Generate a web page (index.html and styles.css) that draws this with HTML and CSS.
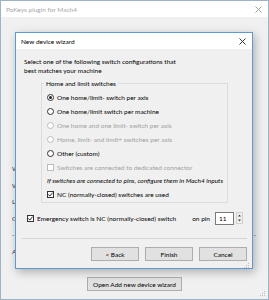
FILE: index.html
```html
<!doctype html>
<html>
  <head>
    <meta charset="utf-8">
    <title>PoKeys plugin for Mach4</title>
    <link rel="stylesheet" href="styles.css">
  </head>
  <body>
    <div class="window">
      <div class="titlebar">
        <span>PoKeys plugin for Mach4</span>
        <svg class="x" width="7" height="7"><path d="M0.5 0.5l6 6M6.5 0.5l-6 6" stroke="#a0a0a0" stroke-width="1"/></svg>
      </div>

      <div class="winbody">
        <div class="row"><span>W</span></div>
        <div class="row"><span>W</span></div>
        <div class="row"><span>L</span></div>
        <div class="row"><span>C</span></div>
        <div class="row"><span>-</span><span>-</span></div>
        <div class="row"><span>A</span></div>
        <div class="bottom">
          <button class="btn openbtn">Open Add new device wizard</button>
        </div>
        <div class="gripbox">
          <svg width="8" height="8"><g fill="#bdbdbd"><rect x="6" y="0" width="1" height="1"/><rect x="4" y="2" width="1" height="1"/><rect x="6" y="2" width="1" height="1"/><rect x="2" y="4" width="1" height="1"/><rect x="4" y="4" width="1" height="1"/><rect x="6" y="4" width="1" height="1"/></g></svg>
        </div>
      </div>

      <!-- the wizard dialog sits over the main window -->
      <div class="dialog">
        <div class="dlgtitle">
          <span>New device wizard</span>
          <svg class="x" width="7" height="7"><path d="M0.5 0.5l6 6M6.5 0.5l-6 6" stroke="#333" stroke-width="1"/></svg>
        </div>
        <div class="dlgbody">
          <p class="intro">Select one of the following switch configurations that<br>best matches your machine</p>

          <fieldset class="group">
            <legend>Home and limit switches</legend>
            <div class="opt"><span class="radio on"></span>One home/limit- switch per axis</div>
            <div class="opt"><span class="radio"></span>One home/limit switch per machine</div>
            <div class="opt off"><span class="radio"></span>One home and one limit- switch per axis</div>
            <div class="opt off"><span class="radio"></span>Home, limit- and limit+ switches per axis</div>
            <div class="opt"><span class="radio"></span>Other (custom)</div>
            <div class="opt off"><span class="check"></span>Switches are connected to dedicated connector</div>
            <div class="note">If switches are connected to pins, configure them in Mach4 inputs</div>
            <div class="opt"><span class="check"><svg width="5" height="5"><path d="M0.3 2.4l1.5 1.7L4.7 0.6" fill="none" stroke="#222" stroke-width="1"/></svg></span>NC (normally-closed) switches are used</div>
          </fieldset>

          <div class="estop">
            <span class="check"><svg width="5" height="5"><path d="M0.3 2.4l1.5 1.7L4.7 0.6" fill="none" stroke="#222" stroke-width="1"/></svg></span>
            <span>Emergency switch is NC (normally-closed) switch</span>
            <span class="pinlabel">on pin</span>
            <span class="spin">11</span>
            <span class="arrows">
              <svg width="7" height="12"><rect x="0.5" y="0.5" width="6" height="11" fill="#f0f0f0" stroke="#d0d0d0"/><path d="M2 4.5h3L3.5 2.5z" fill="#444"/><path d="M2 7.5h3L3.5 9.5z" fill="#444"/></svg>
            </span>
          </div>

          <div class="sep"></div>

          <div class="buttons">
            <button class="btn">&lt; Back</button>
            <button class="btn">Finish</button>
            <button class="btn">Cancel</button>
          </div>
        </div>
        <div class="gripbox dlggrip">
          <svg width="8" height="8"><g fill="#bdbdbd"><rect x="6" y="0" width="1" height="1"/><rect x="4" y="2" width="1" height="1"/><rect x="6" y="2" width="1" height="1"/><rect x="2" y="4" width="1" height="1"/><rect x="4" y="4" width="1" height="1"/><rect x="6" y="4" width="1" height="1"/></g></svg>
        </div>
      </div>
    </div>
  </body>
</html>
```

FILE: styles.css
```css
* {
  box-sizing: border-box;
}

body {
  margin: 0;
  font-family: Lato, "Noto Sans", sans-serif;
  font-size: 6.5px;
  color: #000;
  white-space: nowrap;
}

p {
  margin: 0;
}

.window {
  position: relative;
  width: 269px;
  height: 300px;
  border: 1px solid #9fb3c8;
  background: #f0f0f0;
  overflow: hidden;
}

.titlebar {
  height: 16px;
  background: #fff;
  display: flex;
  align-items: center;
  justify-content: space-between;
  padding: 0 6px 0 5px;
  color: #a8a8a8;
}

.x {
  display: block;
}

.winbody {
  padding: 144px 12px 0 11px;
}

.row {
  display: flex;
  justify-content: space-between;
  height: 16.5px;
  line-height: 16.5px;
  color: #333;
}

.bottom {
  padding: 17px 0 0 75px;
}

.btn {
  font-family: inherit;
  font-size: 6.5px;
  color: #000;
  background: #e1e1e1;
  border: 1px solid #adadad;
  border-radius: 0;
  padding: 0;
  margin: 0;
  height: 14px;
  width: 48px;
}

.openbtn {
  width: 95px;
}

.gripbox {
  display: flex;
  justify-content: flex-end;
  margin: 0 -10px 0 0;
}

.dialog {
  position: absolute;
  left: 14px;
  top: 31px;
  width: 238px;
  height: 237px;
  border: 1px solid #5b9bd5;
  background: #f0f0f0;
  box-shadow: 2px 3px 9px rgba(0, 0, 0, 0.28);
}

.dlgtitle {
  height: 16px;
  background: #fff;
  display: flex;
  align-items: center;
  justify-content: space-between;
  padding: 0 6px 0 5px;
}

.dlgbody {
  padding: 8px 5px 0 8px;
}

.intro {
  line-height: 9px;
}

.group {
  margin: 4px 0 0 17px;
  width: 187px;
  padding: 2px 0 1px 1px;
  border: 1px solid #dcdcdc;
}

.group legend {
  padding: 0 2px;
  margin-left: 1px;
  line-height: 9px;
}

.opt {
  display: flex;
  align-items: center;
  height: 14px;
  padding-left: 4px;
}

.opt.off {
  color: #a0a0a0;
}

.note {
  height: 13px;
  line-height: 13px;
  padding-left: 4px;
  font-style: italic;
}

.radio {
  flex: none;
  width: 7px;
  height: 7px;
  border: 1px solid #333;
  border-radius: 50%;
  background: #fff;
  margin-right: 3px;
  display: flex;
  align-items: center;
  justify-content: center;
}

.radio.on::after {
  content: "";
  width: 3px;
  height: 3px;
  border-radius: 50%;
  background: #222;
}

.off .radio,
.off .check {
  border-color: #bcbcbc;
}

.check {
  flex: none;
  width: 7px;
  height: 7px;
  border: 1px solid #333;
  background: #fff;
  margin-right: 3px;
  display: flex;
  align-items: center;
  justify-content: center;
}

.check svg {
  display: block;
  flex: none;
}

.estop {
  display: flex;
  align-items: center;
  height: 14px;
  margin-top: 8px;
  padding-left: 3px;
}

.pinlabel {
  margin-left: 16px;
}

.spin {
  flex: none;
  margin-left: 5px;
  width: 19px;
  height: 13px;
  line-height: 11px;
  padding-left: 3px;
  background: #fff;
  border: 1px solid #7a7a7a;
}

.arrows {
  margin-left: 2px;
}

.arrows svg {
  display: block;
}

.sep {
  height: 1px;
  background: #d5d5d5;
  margin: 13px 0 0 -2px;
}

.buttons {
  display: flex;
  justify-content: flex-end;
  gap: 6px;
  margin-top: 8px;
}

.dlggrip {
  margin: 2px 2px 0 0;
}
```
